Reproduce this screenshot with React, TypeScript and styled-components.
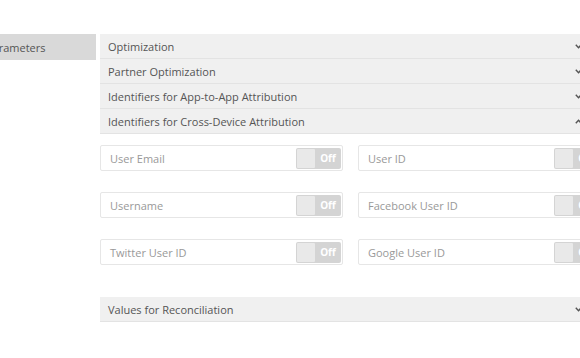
import React from 'react'
import styled, { createGlobalStyle } from 'styled-components'

const GlobalStyle = createGlobalStyle`
  html, body {
    margin: 0;
    padding: 0;
    background: #ffffff;
    overflow: hidden;
  }
  body {
    font-family: "Open Sans", "Noto Sans", sans-serif;
  }
`

const sections = [
  'Optimization',
  'Partner Optimization',
  'Identifiers for App-to-App Attribution',
]

const identifiers = [
  'User Email',
  'User ID',
  'Username',
  'Facebook User ID',
  'Twitter User ID',
  'Google User ID',
]

function Chevron({ up }: { up?: boolean }) {
  return (
    <Caret width="7" height="5" viewBox="0 0 7 5">
      <path
        d={up ? 'M0.8 4.2 L3.5 1.2 L6.2 4.2' : 'M0.8 0.8 L3.5 3.8 L6.2 0.8'}
        fill="none"
        stroke="#555"
        strokeWidth="1.4"
      />
    </Caret>
  )
}

export default function App() {
  return (
    <>
      <GlobalStyle />
      <Page>
        <Sidebar>
          <SideItem>Parameters</SideItem>
        </Sidebar>
        <Main>
          {sections.map((s) => (
            <Header key={s}>
              <span>{s}</span>
              <Chevron />
            </Header>
          ))}
          <Header>
            <span>Identifiers for Cross-Device Attribution</span>
            <Chevron up />
          </Header>
          <Fields>
            {identifiers.map((f) => (
              <Field key={f}>
                <Label>{f}</Label>
                <Toggle>
                  <Knob />
                  <ToggleText>Off</ToggleText>
                </Toggle>
              </Field>
            ))}
          </Fields>
          <Header $spaced>
            <span>Values for Reconciliation</span>
            <Chevron />
          </Header>
        </Main>
      </Page>
    </>
  )
}

const Page = styled.div`
  display: flex;
  align-items: flex-start;
  padding-top: 34px;
  margin-left: -22px;
`

const Sidebar = styled.div`
  width: 118px;
  flex-shrink: 0;
`

const SideItem = styled.div`
  height: 26px;
  display: flex;
  align-items: center;
  padding-left: 8px;
  background: #d9d9d9;
  color: #555;
  font-size: 11px;
`

const Main = styled.div`
  width: 501px;
  flex-shrink: 0;
  margin-left: 4px;
`

const Header = styled.div<{ $spaced?: boolean }>`
  height: 24px;
  display: flex;
  align-items: center;
  justify-content: space-between;
  padding: 0 19px 0 8px;
  background: #f0f0f0;
  border-bottom: 1px solid #e3e3e3;
  color: #555;
  font-size: 11px;
  margin-top: ${({ $spaced }) => ($spaced ? '32px' : '0')};
`

const Caret = styled.svg`
  display: block;
`

const Fields = styled.div`
  display: grid;
  grid-template-columns: 243px 243px;
  column-gap: 15px;
  row-gap: 21px;
  padding-top: 11px;
`

const Field = styled.div`
  height: 24px;
  display: flex;
  align-items: center;
  justify-content: space-between;
  border: 1px solid #e6e6e6;
  border-radius: 2px;
  background: #fff;
  padding-left: 9px;
  padding-right: 1px;
`

const Label = styled.span`
  color: #999;
  font-size: 11px;
`

const Toggle = styled.div`
  width: 45px;
  height: 21px;
  display: flex;
  align-items: center;
  background: #d4d4d4;
  border-radius: 2px;
`

const Knob = styled.div`
  width: 18px;
  height: 19px;
  margin-left: 1px;
  background: #e9e9e9;
  border-radius: 1px;
`

const ToggleText = styled.span`
  flex: 1;
  text-align: center;
  color: #fff;
  font-size: 10px;
  font-weight: 700;
`
